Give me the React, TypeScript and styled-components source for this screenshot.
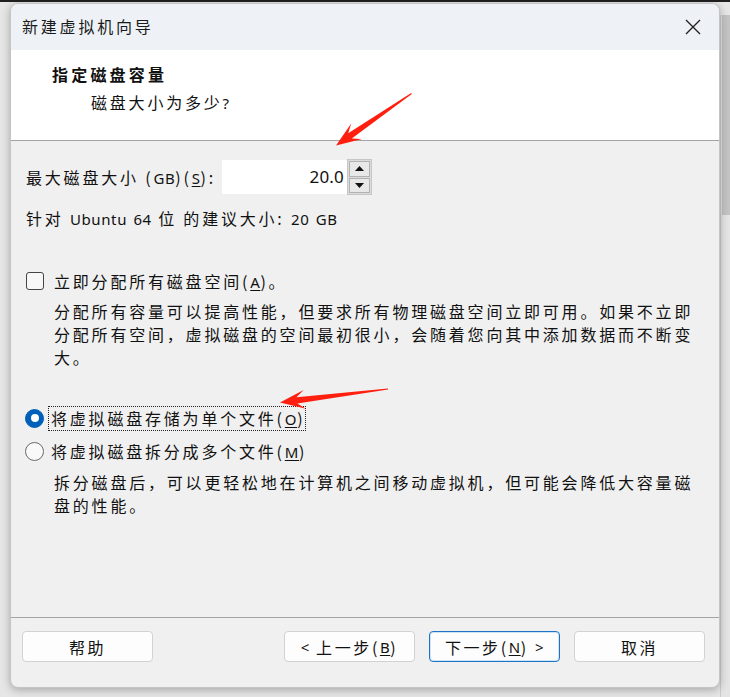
import React from 'react';
import styled, { createGlobalStyle } from 'styled-components';

const Global = createGlobalStyle`
  html, body { margin: 0; padding: 0; }
  body {
    background: #e6e6e6;
    font-family: "Noto Sans", "Noto Sans CJK SC", sans-serif;
    color: #111;
  }
`;

const Page = styled.div`
  position: relative;
  width: 730px;
  height: 697px;
  overflow: hidden;
  box-sizing: border-box;
  border-top: 2px solid #1e1e1e;
  display: flex;
  align-items: flex-start;
  background: #e6e6e6;
`;

const Dialog = styled.div`
  margin: 1px 0 0 10px;
  width: 710px;
  height: 685px;
  box-sizing: border-box;
  border: 1px solid #c4c4c4;
  border-radius: 8px;
  overflow: hidden;
  background: #f0f0f0;
  box-shadow: 0 2px 8px rgba(0, 0, 0, 0.28);
  display: flex;
  flex-direction: column;
  font-family: "Noto Sans CJK SC", sans-serif;
  font-size: 16px;
  letter-spacing: 2.8px;
  position: relative;
  z-index: 1;
`;

const Gutter = styled.div`
  flex: 1;
  margin-top: 13px;
  height: 684px;
  display: flex;
  flex-direction: column;
  padding-left: 1px;
  background: #e4e4e4;
  border-left: 1px solid #cdcdcd;
`;

const Thumb = styled.div`
  height: 200px;
  background: #c3c3c3;
`;

const TitleBar = styled.div`
  height: 46px;
  flex-shrink: 0;
  background: #eef2f6;
  display: flex;
  align-items: center;
  justify-content: space-between;
  padding: 0 18px 0 11px;
`;

const TitleText = styled.span`
  font-size: 16px;
  color: #1b1b1b;
  padding-bottom: 2px;
`;

const CloseIcon = styled.svg`
  width: 16px;
  height: 16px;
  display: block;
`;

const Header = styled.div`
  height: 91px;
  flex-shrink: 0;
  background: #ffffff;
  border-bottom: 1px solid #a3a3a3;
  box-sizing: border-box;
  padding: 12px 0 0 41px;
`;

const HeaderTitle = styled.div`
  font-weight: 700;
  line-height: 24px;
  letter-spacing: 3.2px;
`;

const HeaderSub = styled.div`
  line-height: 24px;
  margin: 4px 0 0 39px;
`;

const Body = styled.div`
  flex: 1;
  padding-left: 15px;
  display: flex;
  flex-direction: column;
`;

const L = styled.span`
  font-family: "Noto Sans", sans-serif;
  font-size: 15px;
  letter-spacing: 0.6px;
`;

const Key = styled.u`
  font-family: "Noto Sans", sans-serif;
  font-size: 15px;
  letter-spacing: 0.6px;
  text-underline-offset: 2px;
`;

const FieldRow = styled.div`
  margin-top: 18px;
  height: 36px;
  display: flex;
  align-items: center;
`;

const FieldLabel = styled.label`
  width: 196px;
  flex-shrink: 0;
  line-height: 24px;
  white-space: nowrap;
`;

const SpinBox = styled.div`
  display: flex;
  align-items: center;
`;

const SpinValue = styled.div`
  width: 125px;
  height: 34px;
  box-sizing: border-box;
  background: #ffffff;
  font-family: "Noto Sans", sans-serif;
  font-size: 17px;
  letter-spacing: 0.2px;
  text-align: right;
  padding-right: 3px;
  line-height: 34px;
  color: #111;
`;

const SpinButtons = styled.div`
  width: 25px;
  height: 36px;
  box-sizing: border-box;
  border: 1px solid #c6c6c6;
  padding: 1px;
  display: flex;
  flex-direction: column;
  gap: 1px;
  background: #dcdcdc;
`;

const SpinButton = styled.div`
  flex: 1;
  box-sizing: border-box;
  border: 1px solid #b2b2b2;
  background: #e8e8e8;
  display: flex;
  align-items: center;
  justify-content: center;
`;

const Tri = styled.svg`
  width: 9px;
  height: 5px;
  display: block;
`;

const Line = styled.div<{ $mt: number }>`
  margin-top: ${p => p.$mt}px;
  line-height: 24px;
  white-space: nowrap;
`;

const OptionRow = styled.div<{ $mt: number }>`
  margin-top: ${p => p.$mt}px;
  height: 24px;
  display: flex;
  align-items: center;
`;

const CheckBox = styled.span`
  width: 18px;
  height: 18px;
  box-sizing: border-box;
  border: 1px solid #444;
  border-radius: 3px;
  background: #f7f7f7;
  margin-right: 8px;
  flex-shrink: 0;
`;

const Radio = styled.span<{ $checked?: boolean }>`
  width: 19px;
  height: 19px;
  box-sizing: border-box;
  border-radius: 50%;
  margin: 0 5px 0 -1px;
  flex-shrink: 0;
  display: flex;
  align-items: center;
  justify-content: center;
  background: ${p => (p.$checked ? '#005fb8' : '#f9f9f9')};
  border: 1px solid ${p => (p.$checked ? '#005fb8' : '#6a6a6a')};
  &::after {
    content: '';
    display: ${p => (p.$checked ? 'block' : 'none')};
    width: 8px;
    height: 8px;
    border-radius: 50%;
    background: #ffffff;
  }
`;

const OptionLabel = styled.span<{ $focused?: boolean }>`
  line-height: 22px;
  padding: 0 0 0 2px;
  white-space: nowrap;
  outline: ${p => (p.$focused ? '1px dotted #222' : 'none')};
  outline-offset: 0;
`;

const Description = styled.div<{ $mt: number }>`
  margin-top: ${p => p.$mt}px;
  padding-left: 28px;
  line-height: 23px;
  white-space: nowrap;
  letter-spacing: 2.8px;
`;

const Footer = styled.div`
  height: 56px;
  flex-shrink: 0;
  border-top: 1px solid #a3a3a3;
  padding: 13px 14px 0 11px;
  display: flex;
  align-items: flex-start;
`;

const ButtonGroup = styled.div`
  margin-left: auto;
  display: flex;
  gap: 14px;
`;

const Button = styled.button<{ $primary?: boolean }>`
  width: 131px;
  height: 31px;
  box-sizing: border-box;
  border-radius: 4px;
  background: #fdfdfd;
  border: 1px solid ${p => (p.$primary ? '#1f74c8' : '#d2d2d2')};
  box-shadow: ${p => (p.$primary ? 'inset 0 0 0 1px #cfe3f7' : 'none')};
  font-family: "Noto Sans CJK SC", sans-serif;
  font-size: 16px;
  letter-spacing: 2.6px;
  color: #111;
  padding: 0;
  display: flex;
  align-items: center;
  justify-content: center;
  white-space: pre;
`;

const ArrowLayer = styled.svg`
  position: absolute;
  left: 0;
  top: 0;
  width: 730px;
  height: 697px;
  pointer-events: none;
  z-index: 5;
`;

function arrowPoints(tx: number, ty: number, px: number, py: number): string {
  const dx = px - tx;
  const dy = py - ty;
  const len = Math.hypot(dx, dy);
  const ux = dx / len;
  const uy = dy / len;
  const nx = -uy;
  const ny = ux;
  const at = (d: number, w: number) => [px - ux * d + nx * w, py - uy * d + ny * w];
  const pts = [
    [tx + nx * 0.5, ty + ny * 0.5],
    at(17, 3.2),
    at(25, 9.5),
    [px, py],
    at(25, -9.5),
    at(17, -3.2),
    [tx - nx * 0.5, ty - ny * 0.5],
  ];
  return pts.map(p => `${p[0].toFixed(1)},${p[1].toFixed(1)}`).join(' ');
}

export default function App() {
  return (
    <>
      <Global />
      <Page>
        <Dialog>
          <TitleBar>
            <TitleText>新建虚拟机向导</TitleText>
            <CloseIcon viewBox="0 0 16 16">
              <path d="M1 1 L15 15 M15 1 L1 15" stroke="#222" strokeWidth="1.4" fill="none" />
            </CloseIcon>
          </TitleBar>
          <Header>
            <HeaderTitle>指定磁盘容量</HeaderTitle>
            <HeaderSub>磁盘大小为多少<L>?</L></HeaderSub>
          </Header>
          <Body>
            <FieldRow>
              <FieldLabel>
                最大磁盘大小 (<L>GB</L>)(<Key>S</Key>):
              </FieldLabel>
              <SpinBox>
                <SpinValue>20.0</SpinValue>
                <SpinButtons>
                  <SpinButton>
                    <Tri viewBox="0 0 9 5"><path d="M0 5 L4.5 0 L9 5 Z" fill="#111" /></Tri>
                  </SpinButton>
                  <SpinButton>
                    <Tri viewBox="0 0 9 5"><path d="M0 0 L9 0 L4.5 5 Z" fill="#111" /></Tri>
                  </SpinButton>
                </SpinButtons>
              </SpinBox>
            </FieldRow>
            <Line $mt={11}>
              针对 <L>Ubuntu</L> <L>64</L> 位 的建议大小: <L>20</L> <L>GB</L>
            </Line>
            <OptionRow $mt={38}>
              <CheckBox />
              <OptionLabel>
                立即分配所有磁盘空间(<Key>A</Key>)。
              </OptionLabel>
            </OptionRow>
            <Description $mt={7}>
              分配所有容量可以提高性能，但要求所有物理磁盘空间立即可用。如果不立即
              <br />
              分配所有空间，虚拟磁盘的空间最初很小，会随着您向其中添加数据而不断变
              <br />
              大。
            </Description>
            <OptionRow $mt={37}>
              <Radio $checked />
              <OptionLabel $focused>
                将虚拟磁盘存储为单个文件(<Key>O</Key>)
              </OptionLabel>
            </OptionRow>
            <OptionRow $mt={9}>
              <Radio />
              <OptionLabel>
                将虚拟磁盘拆分成多个文件(<Key>M</Key>)
              </OptionLabel>
            </OptionRow>
            <Description $mt={8}>
              拆分磁盘后，可以更轻松地在计算机之间移动虚拟机，但可能会降低大容量磁
              <br />
              盘的性能。
            </Description>
          </Body>
          <Footer>
            <Button>帮助</Button>
            <ButtonGroup>
              <Button>
                <L>&lt;</L> 上一步(<Key>B</Key>)
              </Button>
              <Button $primary>
                下一步(<Key>N</Key>) <L>&gt;</L>
              </Button>
              <Button>取消</Button>
            </ButtonGroup>
          </Footer>
        </Dialog>
        <Gutter>
          <Thumb />
        </Gutter>
        <ArrowLayer viewBox="0 0 730 697">
          <polygon points={arrowPoints(411.5, 91.5, 336, 143.5)} fill="#ff1f0f" />
          <polygon points={arrowPoints(388, 387, 280, 400.5)} fill="#ff1f0f" />
        </ArrowLayer>
      </Page>
    </>
  );
}
